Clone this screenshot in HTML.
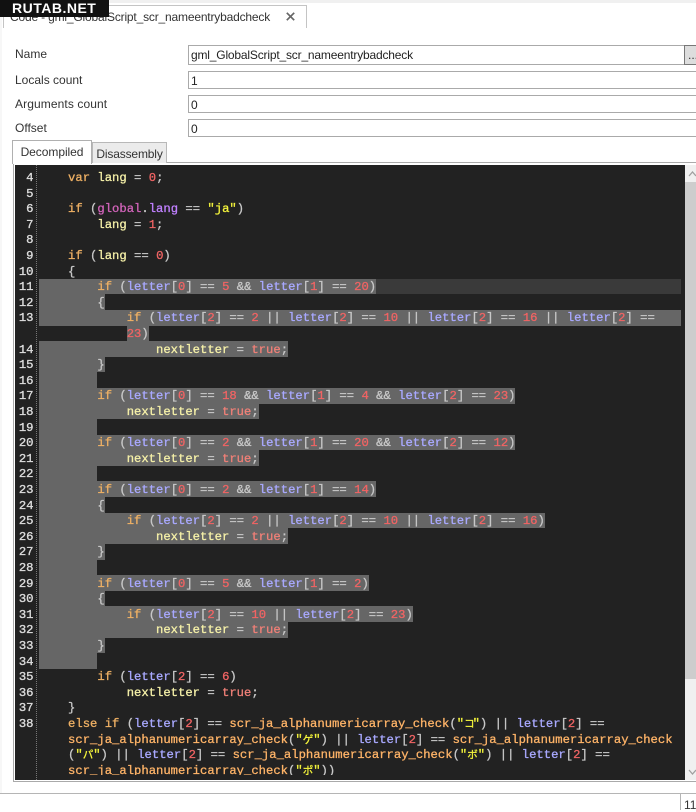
<!DOCTYPE html>
<html><head><meta charset="utf-8"><style>
html,body{margin:0;padding:0;background:#fff}
body{width:696px;height:810px;position:relative;overflow:hidden;font-family:"Liberation Sans","Noto Sans CJK JP",sans-serif;font-size:12px;color:#222}
.a{position:absolute}
.lb{position:absolute;left:15px;font-size:12px;line-height:16px;color:#333}
.in{position:absolute;left:188px;width:520px;height:15px;border:1px solid #aaa;background:#fff;padding-left:2px;font-size:12px;line-height:15px;color:#222}
#ed{position:absolute;left:15px;top:165px;width:670px;height:615px;background:#222}
.r{position:absolute;left:0;top:calc(var(--i)*15.6px + 169.4px);height:15.6px;width:686px;font:12.22px/15.6px "Liberation Mono","Noto Sans CJK JP",monospace;white-space:pre}
.ln{position:absolute;left:15px;top:1.5px;width:18.500px;text-align:right;color:#dcdcdc;-webkit-text-stroke:.35px #dcdcdc;filter:blur(.2px)}
.sel{position:absolute;left:38.7px;top:0;height:15.9px;background:#666}
.cur{position:absolute;left:38.7px;width:642.3px;top:0;height:15.9px;background:#3a3a3a}
.t{position:absolute;left:38.7px;top:1.5px;color:#c8c8c8;-webkit-text-stroke:.3px currentColor;filter:blur(.2px)}
.k{color:#eeb064}.v{color:#f5f0a8}.l{color:#a9a9ff}.n{color:#f06464}.b{color:#f08078}.f{color:#ffb468}.s{color:#f4f43c}.g{color:#d264ba}.m{color:#c080ff}
.j{display:inline-block;width:10.5px;font-size:10.5px;line-height:10px;color:#f4f43c;text-align:center}
</style></head><body>
<div class="a" style="left:0;top:0;width:696px;height:3px;background:#f0f0f0"></div>
<div class="a" style="left:0;top:3px;width:2px;height:790px;background:#f7f7f7"></div>
<div class="a" style="left:3px;top:5px;width:302px;height:22px;border:1px solid #c4c4c4;border-bottom:none;background:#fff"></div>
<div class="a" style="left:10px;top:9px;font-size:12px;line-height:16px;color:#333;white-space:pre;letter-spacing:-.18px">Code - gml_GlobalScript_scr_nameentrybadcheck</div>
<svg class="a" style="left:286px;top:12px" width="9" height="9" viewBox="0 0 9 9"><path d="M.8 .8L8.200 8.200M8.200 .8L.8 8.200" stroke="#666" stroke-width="1.700" fill="none"/></svg>
<div class="a" style="left:0;top:0;width:109px;height:17px;background:#111"></div>
<div class="a" style="left:12px;top:0;height:17px;font-size:14px;font-weight:bold;line-height:17px;color:#fff;letter-spacing:.5px">RUTAB.NET</div>

<div class="lb" style="top:46px">Name</div>
<div class="lb" style="top:72px">Locals count</div>
<div class="lb" style="top:96px;letter-spacing:.1px">Arguments count</div>
<div class="lb" style="top:120px">Offset</div>
<div class="in" style="top:45px;height:18px;line-height:19px;width:493px;border-right:none;letter-spacing:-.18px">gml_GlobalScript_scr_nameentrybadcheck</div>
<div class="a" style="left:684px;top:45px;width:20px;height:18px;background:#ddd;border:1px solid #777;font-size:12px;line-height:19px;padding-left:3px;color:#333">...</div>
<div class="in" style="top:71px;height:16px;line-height:18px">1</div>
<div class="in" style="top:95px;height:16px;line-height:18px">0</div>
<div class="in" style="top:119px;height:16px;line-height:18px">0</div>

<div class="a" style="left:13px;top:162px;width:690px;height:618px;border:1px solid #aaa;background:#fff"></div>
<div class="a" style="left:92px;top:142px;width:73px;height:20px;border:1px solid #b8b8b8;border-bottom:none;background:#ebebeb;font-size:12px;line-height:22px;text-align:center;color:#333;letter-spacing:-.15px">Disassembly</div>
<div class="a" style="left:12px;top:140px;width:78px;height:23px;border:1px solid #b0b0b0;border-bottom:none;background:#fff;font-size:12px;line-height:23px;text-align:center;color:#333;z-index:1;letter-spacing:-.05px">Decompiled</div>

<div id="ed"></div>
<div class="a" style="left:36px;top:165px;width:1px;height:615px;background:repeating-linear-gradient(#777 0 1px,#222 1px 2px)"></div>
<div class="a" style="left:685px;top:165px;width:11px;height:615px;background:#f0f0f0"></div>
<div class="a" style="left:685px;top:182px;width:11px;height:497px;background:#cdcdcd"></div>
<svg class="a" style="left:688px;top:170px" width="8" height="8" viewBox="0 0 8 8"><path d="M1 6L4.500 2L8 6" stroke="#a0a0a0" stroke-width="1.300" fill="none"/></svg>
<svg class="a" style="left:688px;top:768px" width="8" height="8" viewBox="0 0 8 8"><path d="M1 2L4.500 6L8 2" stroke="#a0a0a0" stroke-width="1.300" fill="none"/></svg>

<div class="r" style="--i:0"><div class="ln">4</div><div class="t">    <span class="k">var</span> <span class="v">lang</span> = <span class="n">0</span>;</div></div>
<div class="r" style="--i:1"><div class="ln">5</div></div>
<div class="r" style="--i:2"><div class="ln">6</div><div class="t">    <span class="k">if</span> (<span class="g">global</span>.<span class="m">lang</span> == <span class="s">"ja"</span>)</div></div>
<div class="r" style="--i:3"><div class="ln">7</div><div class="t">        <span class="v">lang</span> = <span class="n">1</span>;</div></div>
<div class="r" style="--i:4"><div class="ln">8</div></div>
<div class="r" style="--i:5"><div class="ln">9</div><div class="t">    <span class="k">if</span> (<span class="v">lang</span> == <span class="n">0</span>)</div></div>
<div class="r" style="--i:6"><div class="ln">10</div><div class="t">    {</div></div>
<div class="r" style="--i:7"><div class="ln">11</div><div class="cur"></div><div class="sel" style="width:46ch"></div><div class="t">        <span class="k">if</span> (<span class="l">letter</span>[<span class="n">0</span>] == <span class="n">5</span> &amp;&amp; <span class="l">letter</span>[<span class="n">1</span>] == <span class="n">20</span>)</div></div>
<div class="r" style="--i:8"><div class="ln">12</div><div class="sel" style="width:9ch"></div><div class="t">        {</div></div>
<div class="r" style="--i:9"><div class="ln">13</div><div class="sel" style="width:642.3px"></div><div class="t">            <span class="k">if</span> (<span class="l">letter</span>[<span class="n">2</span>] == <span class="n">2</span> || <span class="l">letter</span>[<span class="n">2</span>] == <span class="n">10</span> || <span class="l">letter</span>[<span class="n">2</span>] == <span class="n">16</span> || <span class="l">letter</span>[<span class="n">2</span>] ==</div></div>
<div class="r" style="--i:10"><div class="sel" style="left:126.7px;width:3ch"></div><div class="t">            <span class="n">23</span>)</div></div>
<div class="r" style="--i:11"><div class="ln">14</div><div class="sel" style="width:34ch"></div><div class="t">                <span class="v">nextletter</span> = <span class="b">true</span>;</div></div>
<div class="r" style="--i:12"><div class="ln">15</div><div class="sel" style="width:9ch"></div><div class="t">        }</div></div>
<div class="r" style="--i:13"><div class="ln">16</div><div class="sel" style="width:8ch"></div></div>
<div class="r" style="--i:14"><div class="ln">17</div><div class="sel" style="width:65ch"></div><div class="t">        <span class="k">if</span> (<span class="l">letter</span>[<span class="n">0</span>] == <span class="n">18</span> &amp;&amp; <span class="l">letter</span>[<span class="n">1</span>] == <span class="n">4</span> &amp;&amp; <span class="l">letter</span>[<span class="n">2</span>] == <span class="n">23</span>)</div></div>
<div class="r" style="--i:15"><div class="ln">18</div><div class="sel" style="width:30ch"></div><div class="t">            <span class="v">nextletter</span> = <span class="b">true</span>;</div></div>
<div class="r" style="--i:16"><div class="ln">19</div><div class="sel" style="width:8ch"></div></div>
<div class="r" style="--i:17"><div class="ln">20</div><div class="sel" style="width:65ch"></div><div class="t">        <span class="k">if</span> (<span class="l">letter</span>[<span class="n">0</span>] == <span class="n">2</span> &amp;&amp; <span class="l">letter</span>[<span class="n">1</span>] == <span class="n">20</span> &amp;&amp; <span class="l">letter</span>[<span class="n">2</span>] == <span class="n">12</span>)</div></div>
<div class="r" style="--i:18"><div class="ln">21</div><div class="sel" style="width:30ch"></div><div class="t">            <span class="v">nextletter</span> = <span class="b">true</span>;</div></div>
<div class="r" style="--i:19"><div class="ln">22</div><div class="sel" style="width:8ch"></div></div>
<div class="r" style="--i:20"><div class="ln">23</div><div class="sel" style="width:46ch"></div><div class="t">        <span class="k">if</span> (<span class="l">letter</span>[<span class="n">0</span>] == <span class="n">2</span> &amp;&amp; <span class="l">letter</span>[<span class="n">1</span>] == <span class="n">14</span>)</div></div>
<div class="r" style="--i:21"><div class="ln">24</div><div class="sel" style="width:9ch"></div><div class="t">        {</div></div>
<div class="r" style="--i:22"><div class="ln">25</div><div class="sel" style="width:69ch"></div><div class="t">            <span class="k">if</span> (<span class="l">letter</span>[<span class="n">2</span>] == <span class="n">2</span> || <span class="l">letter</span>[<span class="n">2</span>] == <span class="n">10</span> || <span class="l">letter</span>[<span class="n">2</span>] == <span class="n">16</span>)</div></div>
<div class="r" style="--i:23"><div class="ln">26</div><div class="sel" style="width:34ch"></div><div class="t">                <span class="v">nextletter</span> = <span class="b">true</span>;</div></div>
<div class="r" style="--i:24"><div class="ln">27</div><div class="sel" style="width:9ch"></div><div class="t">        }</div></div>
<div class="r" style="--i:25"><div class="ln">28</div><div class="sel" style="width:8ch"></div></div>
<div class="r" style="--i:26"><div class="ln">29</div><div class="sel" style="width:45ch"></div><div class="t">        <span class="k">if</span> (<span class="l">letter</span>[<span class="n">0</span>] == <span class="n">5</span> &amp;&amp; <span class="l">letter</span>[<span class="n">1</span>] == <span class="n">2</span>)</div></div>
<div class="r" style="--i:27"><div class="ln">30</div><div class="sel" style="width:9ch"></div><div class="t">        {</div></div>
<div class="r" style="--i:28"><div class="ln">31</div><div class="sel" style="width:51ch"></div><div class="t">            <span class="k">if</span> (<span class="l">letter</span>[<span class="n">2</span>] == <span class="n">10</span> || <span class="l">letter</span>[<span class="n">2</span>] == <span class="n">23</span>)</div></div>
<div class="r" style="--i:29"><div class="ln">32</div><div class="sel" style="width:34ch"></div><div class="t">                <span class="v">nextletter</span> = <span class="b">true</span>;</div></div>
<div class="r" style="--i:30"><div class="ln">33</div><div class="sel" style="width:9ch"></div><div class="t">        }</div></div>
<div class="r" style="--i:31"><div class="ln">34</div><div class="sel" style="width:8ch"></div></div>
<div class="r" style="--i:32"><div class="ln">35</div><div class="t">        <span class="k">if</span> (<span class="l">letter</span>[<span class="n">2</span>] == <span class="n">6</span>)</div></div>
<div class="r" style="--i:33"><div class="ln">36</div><div class="t">            <span class="v">nextletter</span> = <span class="b">true</span>;</div></div>
<div class="r" style="--i:34"><div class="ln">37</div><div class="t">    }</div></div>
<div class="r" style="--i:35"><div class="ln">38</div><div class="t">    <span class="k">else if</span> (<span class="l">letter</span>[<span class="n">2</span>] == <span class="f">scr_ja_alphanumericarray_check</span>(<span class="s">"<span class="j" style="width:8.500px">コ</span>"</span>) || <span class="l">letter</span>[<span class="n">2</span>] ==</div></div>
<div class="r" style="--i:36"><div class="t">    <span class="f">scr_ja_alphanumericarray_check</span>(<span class="s">"<span class="j">ゲ</span>"</span>) || <span class="l">letter</span>[<span class="n">2</span>] == <span class="f">scr_ja_alphanumericarray_check</span></div></div>
<div class="r" style="--i:37"><div class="t">    (<span class="s">"<span class="j">パ</span>"</span>) || <span class="l">letter</span>[<span class="n">2</span>] == <span class="f">scr_ja_alphanumericarray_check</span>(<span class="s">"<span class="j">ボ</span>"</span>) || <span class="l">letter</span>[<span class="n">2</span>] ==</div></div>
<div class="r" style="--i:38;height:13.200px;overflow:hidden"><div class="t">    <span class="f">scr_ja_alphanumericarray_check</span>(<span class="s">"<span class="j">ポ</span>"</span>))</div></div>

<div class="a" style="left:0;top:793px;width:696px;height:1px;background:#b5b5b5"></div>
<div class="a" style="left:680px;top:793px;width:1px;height:17px;background:#b5b5b5"></div>
<div class="a" style="left:684px;top:798px;font-size:12px;line-height:14px;color:#333">11</div>
</body></html>
